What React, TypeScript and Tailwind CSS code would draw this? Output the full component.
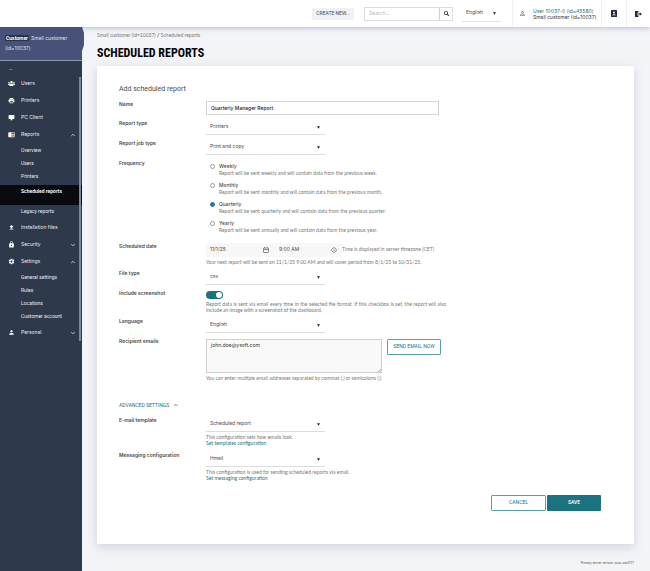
import { useState } from 'react';
import type { ReactNode } from 'react';
import { FaUsers, FaSearch } from 'react-icons/fa';
import {
  MdAccessTime,
  MdChromeReaderMode,
  MdDesktopWindows,
  MdFileUpload,
  MdLock,
  MdOutlineCalendarToday,
  MdPerson,
  MdPersonOutline,
  MdPrint,
  MdSettings,
} from 'react-icons/md';
import { ChevronDown, ChevronUp } from 'lucide-react';

const menu = [
  { label: 'Users', icon: FaUsers },
  { label: 'Printers', icon: MdPrint },
  { label: 'PC Client', icon: MdDesktopWindows },
  {
    label: 'Reports',
    icon: MdChromeReaderMode,
    open: true,
    children: ['Overview', 'Users', 'Printers', 'Scheduled reports', 'Legacy reports'],
  },
  { label: 'Installation files', icon: MdFileUpload },
  { label: 'Security', icon: MdLock, open: false },
  {
    label: 'Settings',
    icon: MdSettings,
    open: true,
    children: ['General settings', 'Rules', 'Locations', 'Customer account'],
  },
  { label: 'Personal', icon: MdPerson, open: false },
];

const frequencies = [
  { name: 'Weekly', text: 'Report will be sent weekly and will contain data from the previous week.' },
  { name: 'Monthly', text: 'Report will be sent monthly and will contain data from the previous month.' },
  { name: 'Quarterly', text: 'Report will be sent quarterly and will contain data from the previous quarter.' },
  { name: 'Yearly', text: 'Report will be sent annually and will contain data from the previous year.' },
];

const Row = ({ label, htmlFor, children }: { label: string; htmlFor?: string; children: ReactNode }) => (
  <div className="flex">
    <label htmlFor={htmlFor} className="w-[87px] shrink-0 text-[5px] leading-[6px] font-semibold text-[#4a4a4a]">
      {label}
    </label>
    <div className="min-w-0 flex-1">{children}</div>
  </div>
);

const Caret = () => (
  <svg className="pointer-events-none absolute top-[6px] right-[5px] h-[3px] w-[3px]" viewBox="0 0 3 3">
    <path d="M0 0.2H3L1.5 2.8Z" fill="#222" />
  </svg>
);

const Select = ({ id, value }: { id: string; value: string }) => (
  <div className="relative w-[119px]">
    <select
      id={id}
      className="block h-[15px] w-full appearance-none border-b border-[#dcdcdc] bg-transparent pl-1 text-[5px] text-[#4a4a4a] outline-none"
    >
      <option>{value}</option>
    </select>
    <Caret />
  </div>
);

const Header = () => (
  <header className="relative z-10 flex h-[27px] items-center justify-end bg-white shadow-[0_1px_5px_rgba(60,80,130,0.35)]">
    <button className="h-[12px] bg-[#f1f2f3] px-1 font-['Roboto',sans-serif] text-[5px] text-[#4a4a4a]">CREATE NEW...</button>
    <form className="ml-[10px] flex h-[14px] w-[89px] border border-[#dcdcdc]">
      <input aria-label="Search" placeholder="Search..." className="min-w-0 flex-1 px-1 text-[5px] outline-none placeholder:text-[#b8b8b8]" />
      <button type="button" aria-label="Run search" className="flex w-[13px] items-center justify-center border-l border-[#cfcfcf] text-[#222]">
        <FaSearch size={5} />
      </button>
    </form>
    <div className="relative ml-[9px] w-[39px]">
      <select aria-label="Language of the page" className="block h-[16px] w-full appearance-none border-b border-[#e4e4e4] pl-1 text-[5px] text-[#4a4a4a] outline-none">
        <option>English</option>
      </select>
      <Caret />
    </div>
    <div className="ml-[11px] flex h-full w-[89px] items-center border-l border-[#f0f0f0] pl-[6px]">
      <MdPersonOutline size={7} className="text-[#555]" />
      <div className="ml-[7px] text-[5px] leading-[6px] whitespace-nowrap text-[#333]">
        <a href="#user" className="block text-[#1b7280]">User 10037-0 (id=45580)</a>
        <span className="block">Small customer (id=10037)</span>
      </div>
    </div>
    <button aria-label="Contacts" className="flex h-full w-[25px] items-center justify-center border-l border-[#f0f0f0]">
      <svg className="h-[7px] w-[6px]" viewBox="0 0 12 14">
        <rect width="12" height="14" rx="1" fill="#252b3d" />
        <circle cx="6" cy="5" r="2" fill="#fff" />
        <path d="M2.5 10.5C2.5 7.5 9.5 7.5 9.5 10.5Z" fill="#fff" />
      </svg>
    </button>
    <button aria-label="Sign out" className="flex h-full w-[24px] items-center justify-center border-l border-[#f0f0f0]">
      <svg className="h-[6px] w-[7px]" viewBox="0 0 14 12">
        <path d="M0 0H7V3H5V9H7V12H0Z" fill="#252b3d" />
        <path d="M6 4.8H9.5V2.5L14 6L9.5 9.5V7.2H6Z" fill="#252b3d" />
      </svg>
    </button>
  </header>
);

const Sidebar = () => (
  <aside className="w-[82px] shrink-0 bg-[#2f394c] text-[5px] text-[#e8eaee]">
    <div className="relative h-[34px] border-b border-[#8d96b3] bg-[#475278] px-[5px] pt-[6px] leading-[10px] text-[#dfe3ee]">
      <div className="flex items-center gap-[2px]">
        <span className="rounded-[1px] bg-[#2a3145] px-px font-['Roboto',sans-serif] leading-[6px] font-bold text-white">
          Customer
        </span>
        <span>Small customer</span>
      </div>
      <div>(id=10037)</div>
      <svg className="absolute top-0 left-full h-[24px] w-[2px]" viewBox="0 0 2 24" preserveAspectRatio="none">
        <path d="M0 0L2 6V18L0 24Z" fill="#475278" />
      </svg>
    </div>
    <div className="h-[14px] pl-[9px] leading-[14px] font-bold">..</div>
    <nav className="relative">
      {menu.map(({ label, icon: Icon, open, children }) => (
        <div key={label}>
          <a href="#menu" className="flex h-[17px] items-center pr-[6px] pl-[8px]">
            <Icon size={7} className="mr-[6px] shrink-0 text-white" />
            <span className="flex-1">{label}</span>
            {open === true && <ChevronUp size={6} strokeWidth={3} />}
            {open === false && <ChevronDown size={6} strokeWidth={3} />}
          </a>
          {children && (
            <ul className="py-px font-['Roboto',sans-serif]">
              {children.map((child) => (
                <li key={child}>
                  <a
                    href="#submenu"
                    className={
                      child === 'Scheduled reports'
                        ? 'mt-[2px] block h-[20px] bg-[#080a0e] pl-[21px] leading-[12px] font-semibold text-white'
                        : 'block h-[13px] pl-[21px] leading-[13px]'
                    }
                  >
                    {child}
                  </a>
                </li>
              ))}
            </ul>
          )}
        </div>
      ))}
      <span className="absolute top-[2px] right-px bottom-0 w-[2px] bg-[#7c879b]" />
    </nav>
  </aside>
);

const App = () => {
  const [frequency, setFrequency] = useState('Quarterly');
  const [screenshot, setScreenshot] = useState(true);
  const [name, setName] = useState('Quarterly Manager Report');
  const [emails, setEmails] = useState('john.doe@ysoft.com');

  return (
    <div className="flex min-h-screen flex-col bg-[#f3f4f7] font-['Inter','Liberation_Sans',sans-serif] text-[5px]">
      <Header />
      <div className="flex flex-1">
        <Sidebar />
        <main className="min-w-0 flex-1 pr-4 pl-[15px]">
          <div className="pt-[5px] font-['Lato',sans-serif] leading-[6px] text-[#777]">
            <a href="#customer">Small customer (id=10037)</a> <span className="text-black">/</span>{' '}
            <a href="#reports">Scheduled reports</a>
          </div>
          <h1 className="mt-[7px] font-['Roboto_Condensed','Liberation_Sans_Narrow',sans-serif] text-[12px] leading-[16px] font-bold text-black">
            SCHEDULED REPORTS
          </h1>

          <form className="mt-[5px] bg-white px-[22px] pt-[18px] pb-[33px] shadow-[0_3px_10px_rgba(60,80,130,0.2)]">
            <h2 className="mb-[7px] font-['Roboto',sans-serif] text-[7px] leading-[10px] text-[#4a4a4a]">Add scheduled report</h2>
            <div className="space-y-[5px]">
              <Row label="Name" htmlFor="name">
                <input
                  id="name"
                  value={name}
                  onChange={(e) => setName(e.target.value)}
                  className="block h-[14px] w-[233px] border border-[#d5d5d5] px-1 font-medium text-[#222] outline-none"
                />
              </Row>
              <Row label="Report type" htmlFor="type">
                <Select id="type" value="Printers" />
              </Row>
              <Row label="Report job type" htmlFor="job">
                <Select id="job" value="Print and copy" />
              </Row>
              <Row label="Frequency">
                <div className="space-y-1 pt-[2px] pb-1">
                  {frequencies.map((item) => (
                    <label key={item.name} className="flex">
                      <input
                        type="radio"
                        name="frequency"
                        checked={frequency === item.name}
                        onChange={() => setFrequency(item.name)}
                        className="mt-[2px] mr-[4px] ml-1 h-[5px] w-[5px] appearance-none rounded-full border border-[#999] checked:border-[#1a75c9] checked:bg-[#1a75c9]"
                      />
                      <span>
                        <span className="block leading-[8px] font-medium text-[#4a4a4a]">{item.name}</span>
                        <span className="block font-['Lato',sans-serif] leading-[7px] text-[#777]">{item.text}</span>
                      </span>
                    </label>
                  ))}
                </div>
              </Row>
              <Row label="Scheduled date" htmlFor="date">
                <div className="flex items-center">
                  <div className="flex h-[14px] w-[136px] items-center bg-[#f7f7f7] pr-[5px] text-[#4a4a4a]">
                    <input id="date" defaultValue="11/1/25" className="w-[57px] pl-1 outline-none" />
                    <MdOutlineCalendarToday size={6} className="text-[#222]" />
                    <input aria-label="Scheduled time" defaultValue="9:00 AM" className="ml-[10px] w-0 flex-1 outline-none" />
                    <MdAccessTime size={6} />
                  </div>
                  <span className="font-['Lato',sans-serif] text-[#777]">Time is displayed in server timezone (CET)</span>
                </div>
                <p className="mt-[2px] font-['Lato',sans-serif] leading-[6px] text-[#777]">
                  Your next report will be sent on 11/1/25 9:00 AM and will cover period from 8/1/25 to 10/31/25.
                </p>
              </Row>
              <Row label="File type" htmlFor="file">
                <Select id="file" value="csv" />
              </Row>
              <Row label="Include screenshot" htmlFor="screenshot">
                <div className="relative mt-px h-2 w-[17px]">
                  <input
                    id="screenshot"
                    type="checkbox"
                    checked={screenshot}
                    onChange={(e) => setScreenshot(e.target.checked)}
                    className="peer block h-2 w-[17px] appearance-none rounded-full bg-[#aaa] checked:bg-[#1b7280]"
                  />
                  <span className="pointer-events-none absolute top-px left-px h-[6px] w-[6px] rounded-full bg-white peer-checked:left-[10px]" />
                </div>
                <p className="mt-[2px] w-[240px] text-justify font-['Lato',sans-serif] leading-[6px] text-[#777]">
                  Report data is sent via email every time in the selected file format. If this checkbox is set, the report will also
                  include an image with a screenshot of the dashboard.
                </p>
              </Row>
              <Row label="Language" htmlFor="language">
                <Select id="language" value="English" />
              </Row>
              <Row label="Recipient emails" htmlFor="emails">
                <div className="flex items-start pt-px">
                  <div className="relative w-[176px]">
                    <textarea
                      id="emails"
                      value={emails}
                      onChange={(e) => setEmails(e.target.value)}
                      className="block h-[34px] w-full resize-none border border-[#cfcfcf] bg-[#f9f9f9] px-1 py-[2px] leading-[7px] text-[#333] outline-none"
                    />
                    <svg className="pointer-events-none absolute right-px bottom-px h-[3px] w-[3px]" viewBox="0 0 6 6">
                      <path d="M0 6L6 0M3 6L6 3" stroke="#777" fill="none" />
                    </svg>
                  </div>
                  <button type="button" className="ml-[5px] h-4 w-[54px] rounded-[1px] border border-[#5c9fa9] font-['Roboto',sans-serif] text-[#1b7280]">
                    SEND EMAIL NOW
                  </button>
                </div>
                <p className="mt-[2px] font-['Lato',sans-serif] leading-[6px] text-[#777]">
                  You can enter multiple email addresses separated by commas (,) or semicolons (;).
                </p>
              </Row>
            </div>

            <button type="button" className="mt-[21px] mb-[9px] flex items-center gap-1 font-['Roboto',sans-serif] leading-[6px] text-[#1b7280]">
              ADVANCED SETTINGS <ChevronUp size={6} strokeWidth={3} />
            </button>

            <div className="space-y-[6px]">
              <Row label="E-mail template" htmlFor="template">
                <Select id="template" value="Scheduled report" />
                <div className="mt-[2px] font-['Lato',sans-serif] leading-[6px] text-[#777]">
                  <p>This configuration sets how emails look.</p>
                  <a href="#templates" className="block text-[#1b7280]">Set templates configuration</a>
                </div>
              </Row>
              <Row label="Messaging configuration" htmlFor="messaging">
                <Select id="messaging" value="Hmail" />
                <div className="mt-[2px] font-['Lato',sans-serif] leading-[6px] text-[#777]">
                  <p>This configuration is used for sending scheduled reports via email.</p>
                  <a href="#messaging" className="block text-[#1b7280]">Set messaging configuration</a>
                </div>
              </Row>
            </div>

            <div className="mt-[14px] flex justify-end gap-px pr-[11px] font-['Roboto',sans-serif]">
              <button type="button" className="h-4 w-[55px] rounded-[1px] border border-[#5c9fa9] text-[#1b7280]">CANCEL</button>
              <button type="button" className="h-4 w-[54px] rounded-[1px] bg-[#1b7280] font-medium text-white">SAVE</button>
            </div>
          </form>

          <footer className="mt-4 text-right text-[3px] leading-[6px] text-[#444]">Primary server version: xuxu-xmi2177</footer>
        </main>
      </div>
    </div>
  );
};

export default App;
